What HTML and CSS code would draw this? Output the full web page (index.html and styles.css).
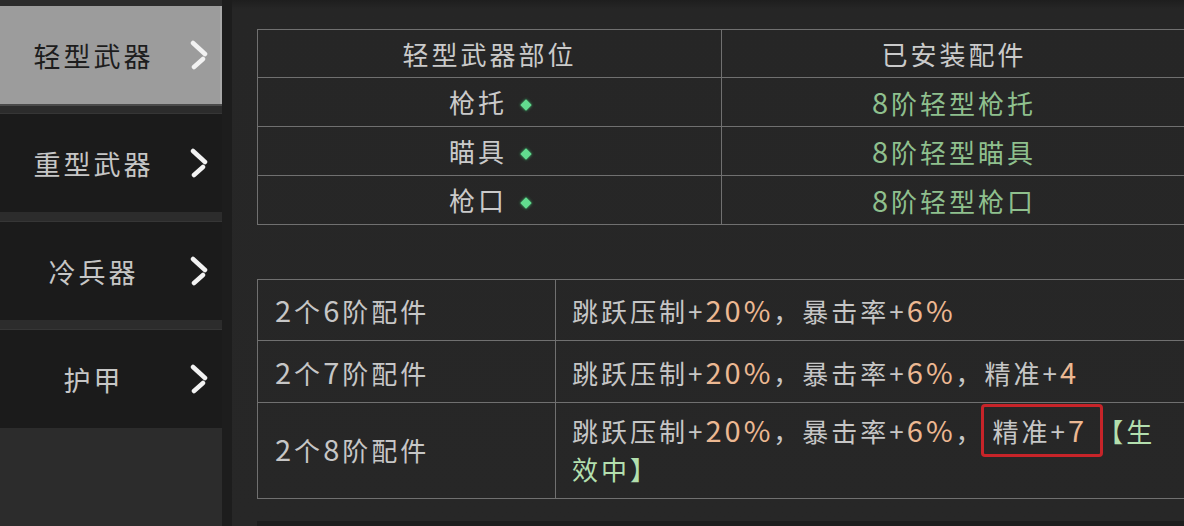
FILE: index.html
```html
<!DOCTYPE html>
<html lang="zh">
<head>
<meta charset="utf-8">
<link rel="stylesheet" href="styles.css">
</head>
<body>
<div class="page">
  <nav class="sidebar">
    <div class="nav-item active">
      <span class="nav-label">轻型武器</span>
      <svg class="chev" viewBox="0 0 18 30" width="18" height="30"><path d="M3 3 L15 14"/><path d="M13 19 L4 27"/></svg>
    </div>
    <div class="nav-item">
      <span class="nav-label">重型武器</span>
      <svg class="chev" viewBox="0 0 18 30" width="18" height="30"><path d="M3 3 L15 14"/><path d="M13 19 L4 27"/></svg>
    </div>
    <div class="nav-item">
      <span class="nav-label">冷兵器</span>
      <svg class="chev" viewBox="0 0 18 30" width="18" height="30"><path d="M3 3 L15 14"/><path d="M13 19 L4 27"/></svg>
    </div>
    <div class="nav-item">
      <span class="nav-label">护甲</span>
      <svg class="chev" viewBox="0 0 18 30" width="18" height="30"><path d="M3 3 L15 14"/><path d="M13 19 L4 27"/></svg>
    </div>
  </nav>
  <div class="divider"></div>
  <main class="content">
    <table class="parts">
      <tr class="head">
        <th class="c1">轻型武器部位</th>
        <th>已安装配件</th>
      </tr>
      <tr>
        <td class="c1">枪托 <span class="dot"></span></td>
        <td class="green"><span class="n">8</span>阶轻型枪托</td>
      </tr>
      <tr>
        <td class="c1">瞄具 <span class="dot"></span></td>
        <td class="green"><span class="n">8</span>阶轻型瞄具</td>
      </tr>
      <tr>
        <td class="c1">枪口 <span class="dot"></span></td>
        <td class="green"><span class="n">8</span>阶轻型枪口</td>
      </tr>
    </table>

    <table class="bonus">
      <tr class="r1">
        <td class="b1"><span class="n">2</span>个<span class="n">6</span>阶配件</td>
        <td class="b2">跳跃压制+<span class="val n">20%</span>，暴击率+<span class="val n">6%</span></td>
      </tr>
      <tr class="r2">
        <td class="b1"><span class="n">2</span>个<span class="n">7</span>阶配件</td>
        <td class="b2">跳跃压制+<span class="val n">20%</span>，暴击率+<span class="val n">6%</span>，精准+<span class="val n">4</span></td>
      </tr>
      <tr class="r3">
        <td class="b1"><span class="n">2</span>个<span class="n">8</span>阶配件</td>
        <td class="b2">跳跃压制+<span class="val n">20%</span>，暴击率+<span class="val n">6%</span>，<span class="mark">精准+<span class="val n">7</span></span><span class="active-tag">【生效中】</span></td>
      </tr>
    </table>
    <div class="next-block"></div>
  </main>
</div>
</body>
</html>
```

FILE: styles.css
```css
html, body {
  margin: 0;
  padding: 0;
}
body {
  width: 1184px;
  height: 526px;
  overflow: hidden;
  background: #272727;
  font-family: "Noto Sans CJK SC", "Noto Sans", sans-serif;
  color: #c9c9c9;
}
.page {
  display: flex;
  height: 526px;
}
.sidebar {
  width: 222px;
  flex: none;
  background: #2c2c2c;
  padding-top: 6px;
  display: flex;
  flex-direction: column;
  gap: 10px;
  box-sizing: border-box;
}
.nav-item {
  height: 98px;
  background: #1b1b1b;
  display: flex;
  align-items: center;
  box-shadow: 0 -1px 0 #363636;
}
.nav-label {
  width: 184px;
  text-align: center;
  font-size: 27px;
  letter-spacing: 3px;
  text-indent: 3px;
  color: #c6c6c6;
}
.nav-item.active {
  background: #9c9c9c;
  box-shadow: inset -2px 0 0 #a8a8a8, 0 2px 0 #4a4a4a;
}
.nav-item.active .nav-label {
  color: #1d1d1d;
}
.chev {
  margin-left: 6px;
  fill: none;
  stroke: #f2f2f2;
  stroke-width: 4.5;
  stroke-linecap: round;
}
.divider {
  width: 10px;
  flex: none;
  background: #1d1d1d;
}
.content {
  flex: 1;
  padding-left: 25px;
  padding-top: 29px;
  background: linear-gradient(#1e1e1e 0, #262626 9px, #272727 100%);
  overflow: hidden;
}
table {
  border-collapse: collapse;
  table-layout: fixed;
}
td, th {
  border: 1px solid #707070;
  padding: 0;
  font-weight: normal;
  font-size: 26px;
  letter-spacing: 3px;
}
.n {
  font-size: 29px;
  letter-spacing: 3px;
}
.parts {
  width: 930px;
}
.parts .c1 {
  width: 463px;
}
.parts th, .parts td {
  text-align: center;
  height: 48px;
  line-height: 30px;
  color: #cacaca;
}
.parts th {
  height: 47px;
}
.parts td.green {
  color: #8fc08e;
}
.dot {
  display: inline-block;
  width: 8px;
  height: 8px;
  background: #62dc8f;
  transform: rotate(45deg);
  margin-left: 6px;
  vertical-align: 4px;
  box-shadow: 0 0 3px #3fbf6e;
}
.bonus {
  width: 930px;
  margin-top: 54px;
}
.bonus td {
  color: #c6c6c6;
  letter-spacing: 3px;
  line-height: 38px;
  vertical-align: middle;
}
.bonus .b1 {
  width: 298px;
  padding-left: 17px;
  box-sizing: border-box;
  letter-spacing: 3px;
}
.bonus .b2 {
  padding-left: 16px;
  padding-right: 8px;
}
.bonus .r1 td { height: 60px; }
.bonus .r2 td { height: 61px; }
.bonus .r3 td { height: 91px; padding-bottom: 4px; }
.val {
  color: #ecb892;
}
.mark {
  border: 3px solid #c72429;
  border-radius: 4px;
  padding: 5px 13px 5px 9px;
  margin-left: -4px;
}
.active-tag {
  color: #b3dfae;
  margin-left: -6px;
}
.next-block {
  margin-top: 22px;
  height: 20px;
  background: #1d1d1d;
}
```
